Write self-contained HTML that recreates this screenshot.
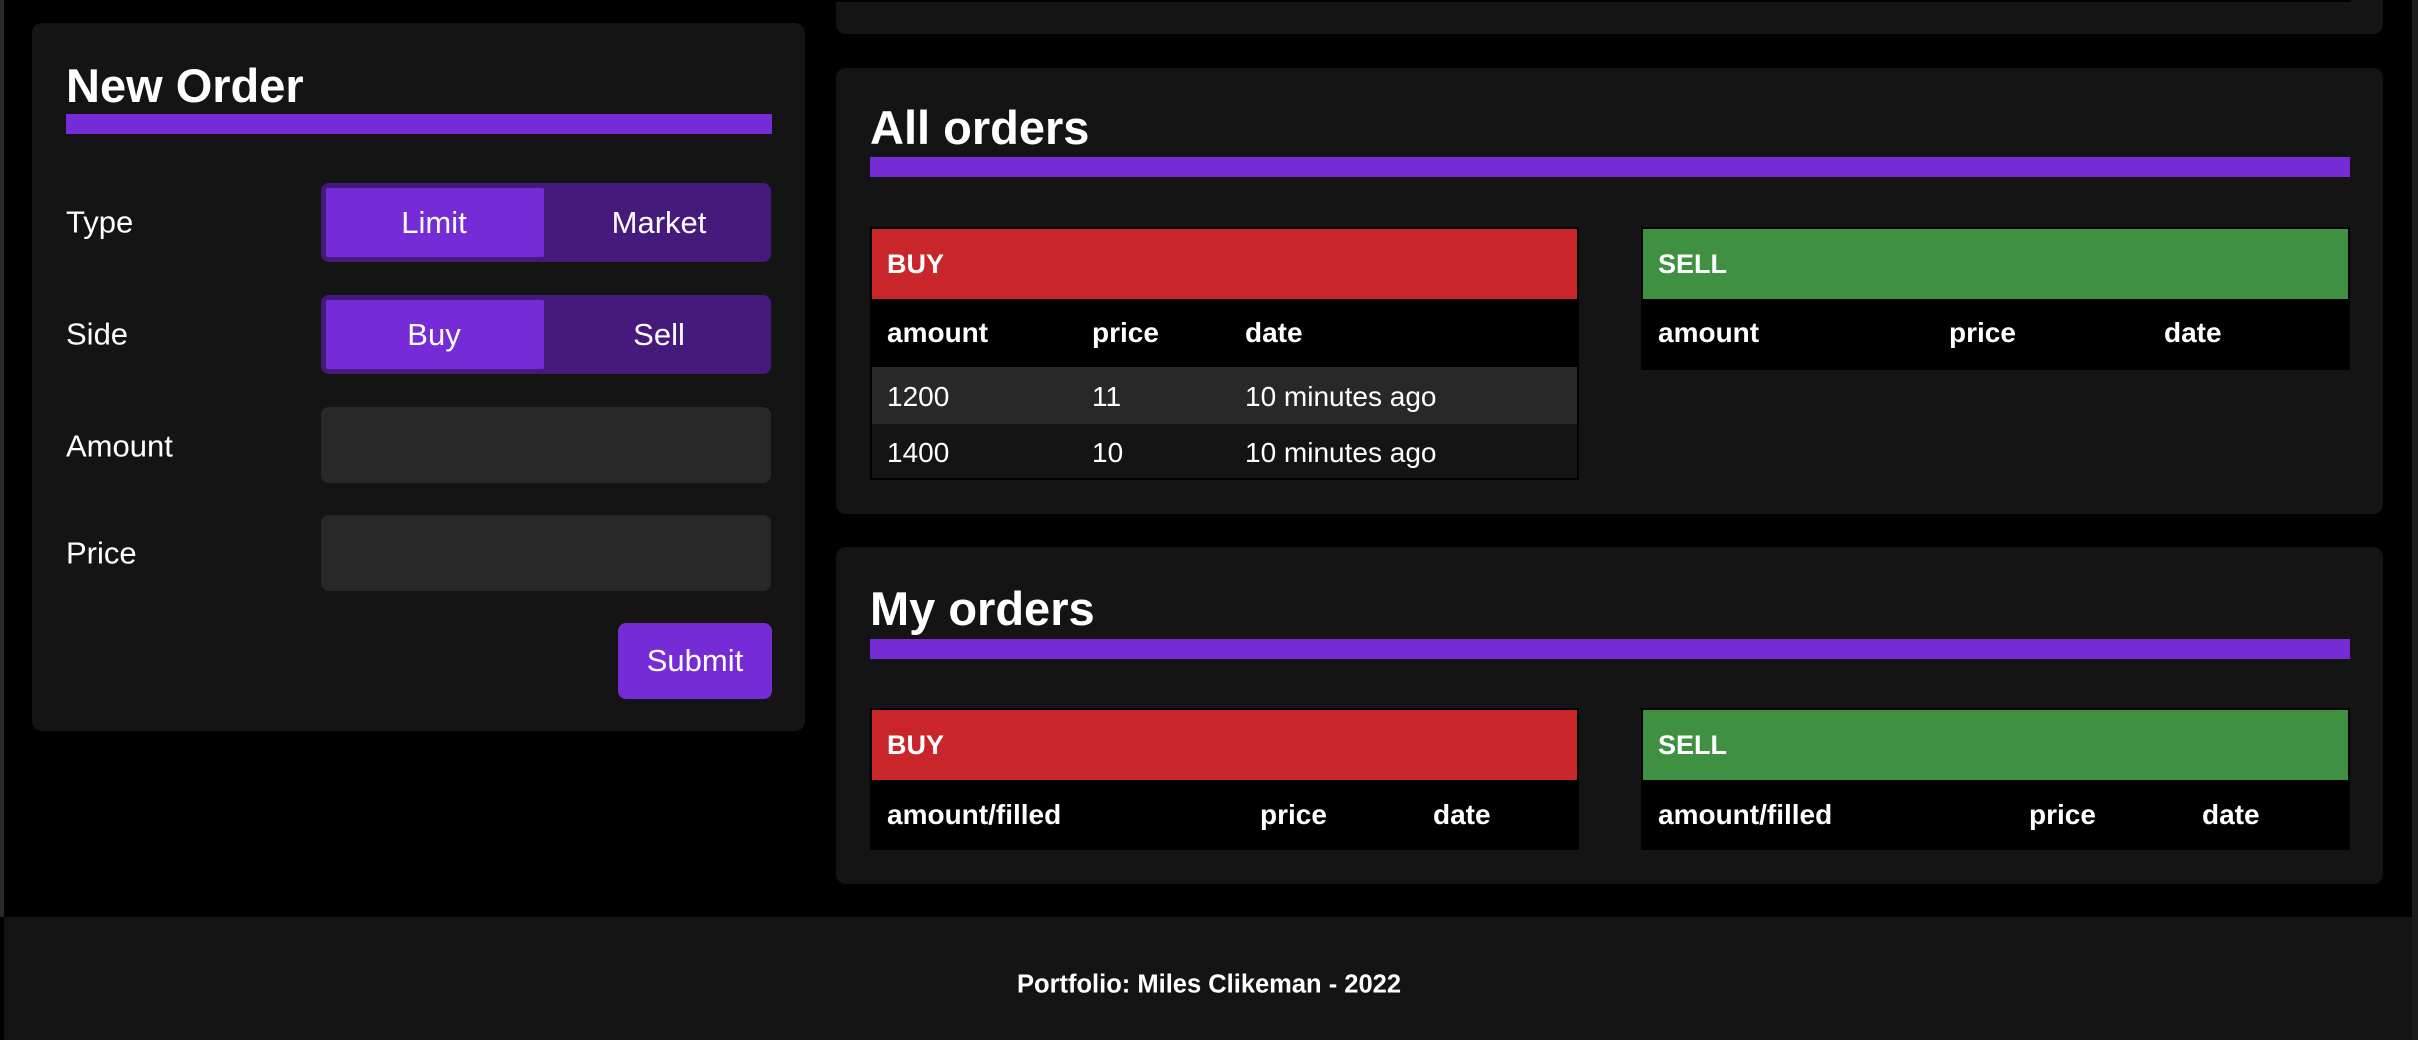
<!DOCTYPE html>
<html><head><meta charset="utf-8"><style>
*{margin:0;padding:0;box-sizing:border-box}
body{width:2418px;height:1040px;background:#000;font-family:"Liberation Sans",Arial,sans-serif;color:#fff;position:relative;overflow:hidden}
.a{position:absolute}
.panel{position:absolute;background:#141414;border-radius:10px}
.title{position:absolute;font-weight:bold;font-size:47px;line-height:1}
.bar{position:absolute;background:#752bd5;height:20px}
.lbl{position:absolute;font-size:31px;line-height:1;transform:translateY(-50%)}
.tog{position:absolute;background:#461a7d;border-radius:8px;width:450px;height:79px}
.tog .on{position:absolute;left:5px;top:5px;width:218px;height:69px;background:#752bd5;border-radius:2px}
.tog span{position:absolute;top:50%;transform:translate(-50%,-50%);font-size:31px}
.inp{position:absolute;left:321px;width:450px;height:76px;background:#282828;border-radius:8px}
.tbl{position:absolute;background:#000;border:2px solid #000}
.hd{position:absolute;left:0;right:0;top:0;height:70px;font-weight:bold;font-size:27px;display:flex;align-items:center;padding-left:15px}
.t{position:absolute;font-size:28px;transform:translateY(-50%);line-height:1}
.b{font-weight:bold}
</style></head><body>
<div class="a" style="left:0;top:0;width:4px;height:917px;background:#2a2a2a"></div>
<div class="a" style="left:2412px;top:0;width:6px;height:1040px;background:#1c1c1c"></div>

<div class="panel" style="left:32px;top:23px;width:773px;height:708px"></div>
<div class="title" style="left:66px;top:62px">New Order</div>
<div class="bar" style="left:66px;top:114px;width:706px"></div>
<div class="lbl" style="left:66px;top:222px">Type</div>
<div class="tog" style="left:321px;top:183px"><div class="on"></div><span style="left:113px">Limit</span><span style="left:338px">Market</span></div>
<div class="lbl" style="left:66px;top:334px">Side</div>
<div class="tog" style="left:321px;top:295px"><div class="on"></div><span style="left:113px">Buy</span><span style="left:338px">Sell</span></div>
<div class="lbl" style="left:66px;top:446px">Amount</div>
<div class="inp" style="top:407px"></div>
<div class="lbl" style="left:66px;top:553px">Price</div>
<div class="inp" style="top:515px"></div>
<div class="a" style="left:618px;top:623px;width:154px;height:76px;background:#752bd5;border-radius:8px;font-size:31px;display:flex;align-items:center;justify-content:center">Submit</div>

<div class="panel" style="left:836px;top:-20px;width:1547px;height:54px"></div>
<div class="a" style="left:836px;top:0;width:1515px;height:2px;background:#000"></div>

<div class="panel" style="left:836px;top:68px;width:1547px;height:446px"></div>
<div class="title" style="left:870px;top:104px">All orders</div>
<div class="bar" style="left:870px;top:157px;width:1480px"></div>
<div class="tbl" style="left:870px;top:227px;width:709px;height:253px">
 <div class="hd" style="background:#c8262a">BUY</div>
 <div class="a" style="left:0;right:0;top:138px;height:57px;background:#282828"></div>
 <div class="a" style="left:0;right:0;top:195px;height:54px;background:#141414"></div>
 <div class="t b" style="left:15px;top:104px">amount</div><div class="t b" style="left:220px;top:104px">price</div><div class="t b" style="left:373px;top:104px">date</div>
 <div class="t" style="left:15px;top:168px">1200</div><div class="t" style="left:220px;top:168px">11</div><div class="t" style="left:373px;top:168px">10 minutes ago</div>
 <div class="t" style="left:15px;top:224px">1400</div><div class="t" style="left:220px;top:224px">10</div><div class="t" style="left:373px;top:224px">10 minutes ago</div>
</div>
<div class="tbl" style="left:1641px;top:227px;width:709px;height:143px">
 <div class="hd" style="background:#3f9141">SELL</div>
 <div class="t b" style="left:15px;top:104px">amount</div><div class="t b" style="left:306px;top:104px">price</div><div class="t b" style="left:521px;top:104px">date</div>
</div>

<div class="panel" style="left:836px;top:547px;width:1547px;height:337px"></div>
<div class="title" style="left:870px;top:585px">My orders</div>
<div class="bar" style="left:870px;top:639px;width:1480px"></div>
<div class="tbl" style="left:870px;top:708px;width:709px;height:142px">
 <div class="hd" style="background:#c8262a">BUY</div>
 <div class="t b" style="left:15px;top:105px">amount/filled</div><div class="t b" style="left:388px;top:105px">price</div><div class="t b" style="left:561px;top:105px">date</div>
</div>
<div class="tbl" style="left:1641px;top:708px;width:709px;height:142px">
 <div class="hd" style="background:#3f9141">SELL</div>
 <div class="t b" style="left:15px;top:105px">amount/filled</div><div class="t b" style="left:386px;top:105px">price</div><div class="t b" style="left:559px;top:105px">date</div>
</div>

<div class="a" style="left:4px;top:917px;width:2408px;height:123px;background:#141414"></div>
<div class="a" style="left:0;width:2418px;top:985px;transform:translateY(-50%);text-align:center;font-weight:bold;font-size:25.5px">Portfolio: Miles Clikeman - 2022</div>
</body></html>
